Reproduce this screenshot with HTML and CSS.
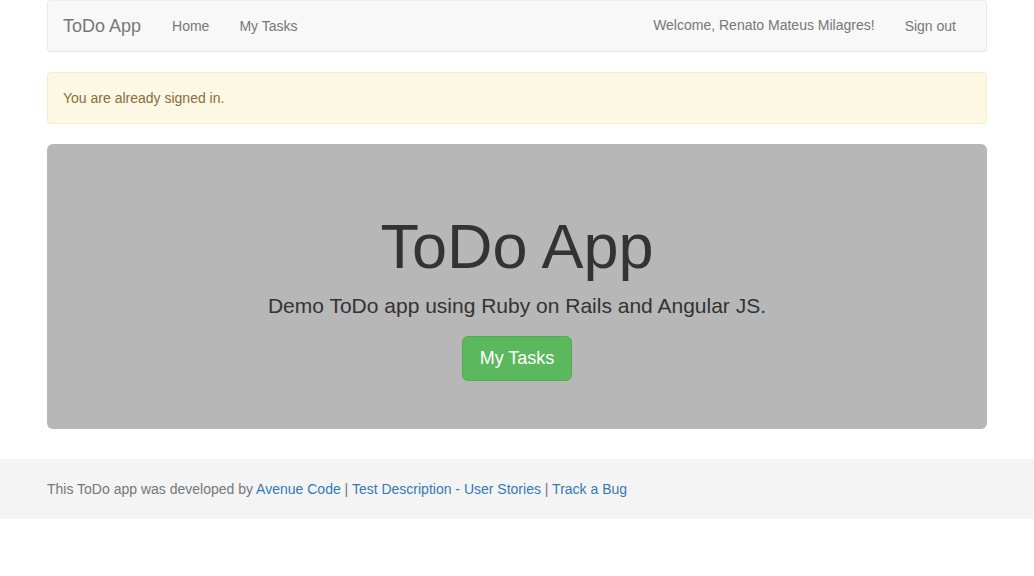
FILE: index.html
```html
<!DOCTYPE html>
<html>
<head>
<meta charset="utf-8">
<title>ToDo App</title>
<link rel="stylesheet" href="styles.css">
</head>
<body>
<div class="container">
  <nav class="navbar">
    <div class="nav-left">
      <a class="brand" href="#">ToDo App</a>
      <a class="nav-link" href="#">Home</a>
      <a class="nav-link" href="#">My Tasks</a>
    </div>
    <div class="nav-right">
      <span class="nav-text">Welcome, Renato Mateus Milagres!</span>
      <a class="nav-link" href="#">Sign out</a>
    </div>
  </nav>
  <div class="alert">You are already signed in.</div>
  <div class="jumbotron">
    <h1 class="jumbo-title">ToDo App</h1>
    <p class="jumbo-lead">Demo ToDo app using Ruby on Rails and Angular JS.</p>
    <p class="jumbo-actions"><a class="btn-success" href="#">My Tasks</a></p>
  </div>
</div>
<footer class="footer">
  <div class="container footer-inner">
    This ToDo app was developed by <a href="#">Avenue Code</a> | <a href="#">Test Description - User Stories</a> | <a href="#">Track a Bug</a>
  </div>
</footer>
</body>
</html>
```
FILE: styles.css
```css
* { box-sizing: border-box; }
html, body { margin: 0; padding: 0; }
body {
  font-family: "Liberation Sans", Arial, sans-serif;
  font-size: 14px;
  line-height: 1.42857;
  color: #333;
  background: #fff;
}
a { text-decoration: none; color: #337ab7; }
.container {
  width: 970px;
  margin: 0 auto;
  padding: 0 15px;
}
.navbar {
  display: flex;
  justify-content: space-between;
  align-items: center;
  height: 52px;
  background: #f8f8f8;
  border: 1px solid #e7e7e7;
  border-top-color: #ececec;
  border-radius: 4px;
  margin-bottom: 20px;
  padding: 0 15px;
}
.nav-left, .nav-right { display: flex; align-items: center; height: 100%; }
.brand {
  font-size: 18px;
  line-height: 20px;
  color: #777;
  padding: 15px 16px 15px 0;
}
.nav-link {
  color: #777;
  padding: 15px;
  line-height: 20px;
}
.nav-text {
  color: #777;
  margin: 0 15px;
}
.alert {
  background: #fcf8e3;
  border: 1px solid #faebcc;
  color: #8a6d3b;
  border-radius: 4px;
  padding: 15px;
  margin-bottom: 20px;
  line-height: 20px;
}
.jumbotron {
  background: #b7b7b7;
  border-radius: 6px;
  padding: 48px 60px 48px;
  text-align: center;
  margin-bottom: 30px;
  height: 285px;
}
.jumbo-title {
  font-size: 63px;
  font-weight: 500;
  line-height: 1.1;
  margin: 20px 0 10px;
  color: #333;
}
.jumbo-lead {
  font-size: 21px;
  font-weight: 200;
  margin: 0 0 15px;
  line-height: 30px;
  color: #333;
}
.jumbo-actions { margin: 0; }
.btn-success {
  display: inline-block;
  background: #5cb85c;
  border: 1px solid #4cae4c;
  color: #fff;
  font-size: 18px;
  line-height: 23px;
  padding: 10px 17px;
  border-radius: 6px;
}
.footer {
  background: #f4f4f4;
  height: 60px;
  padding-top: 2px;
  display: flex;
  align-items: center;
}
.footer-inner { color: #777; }
```
